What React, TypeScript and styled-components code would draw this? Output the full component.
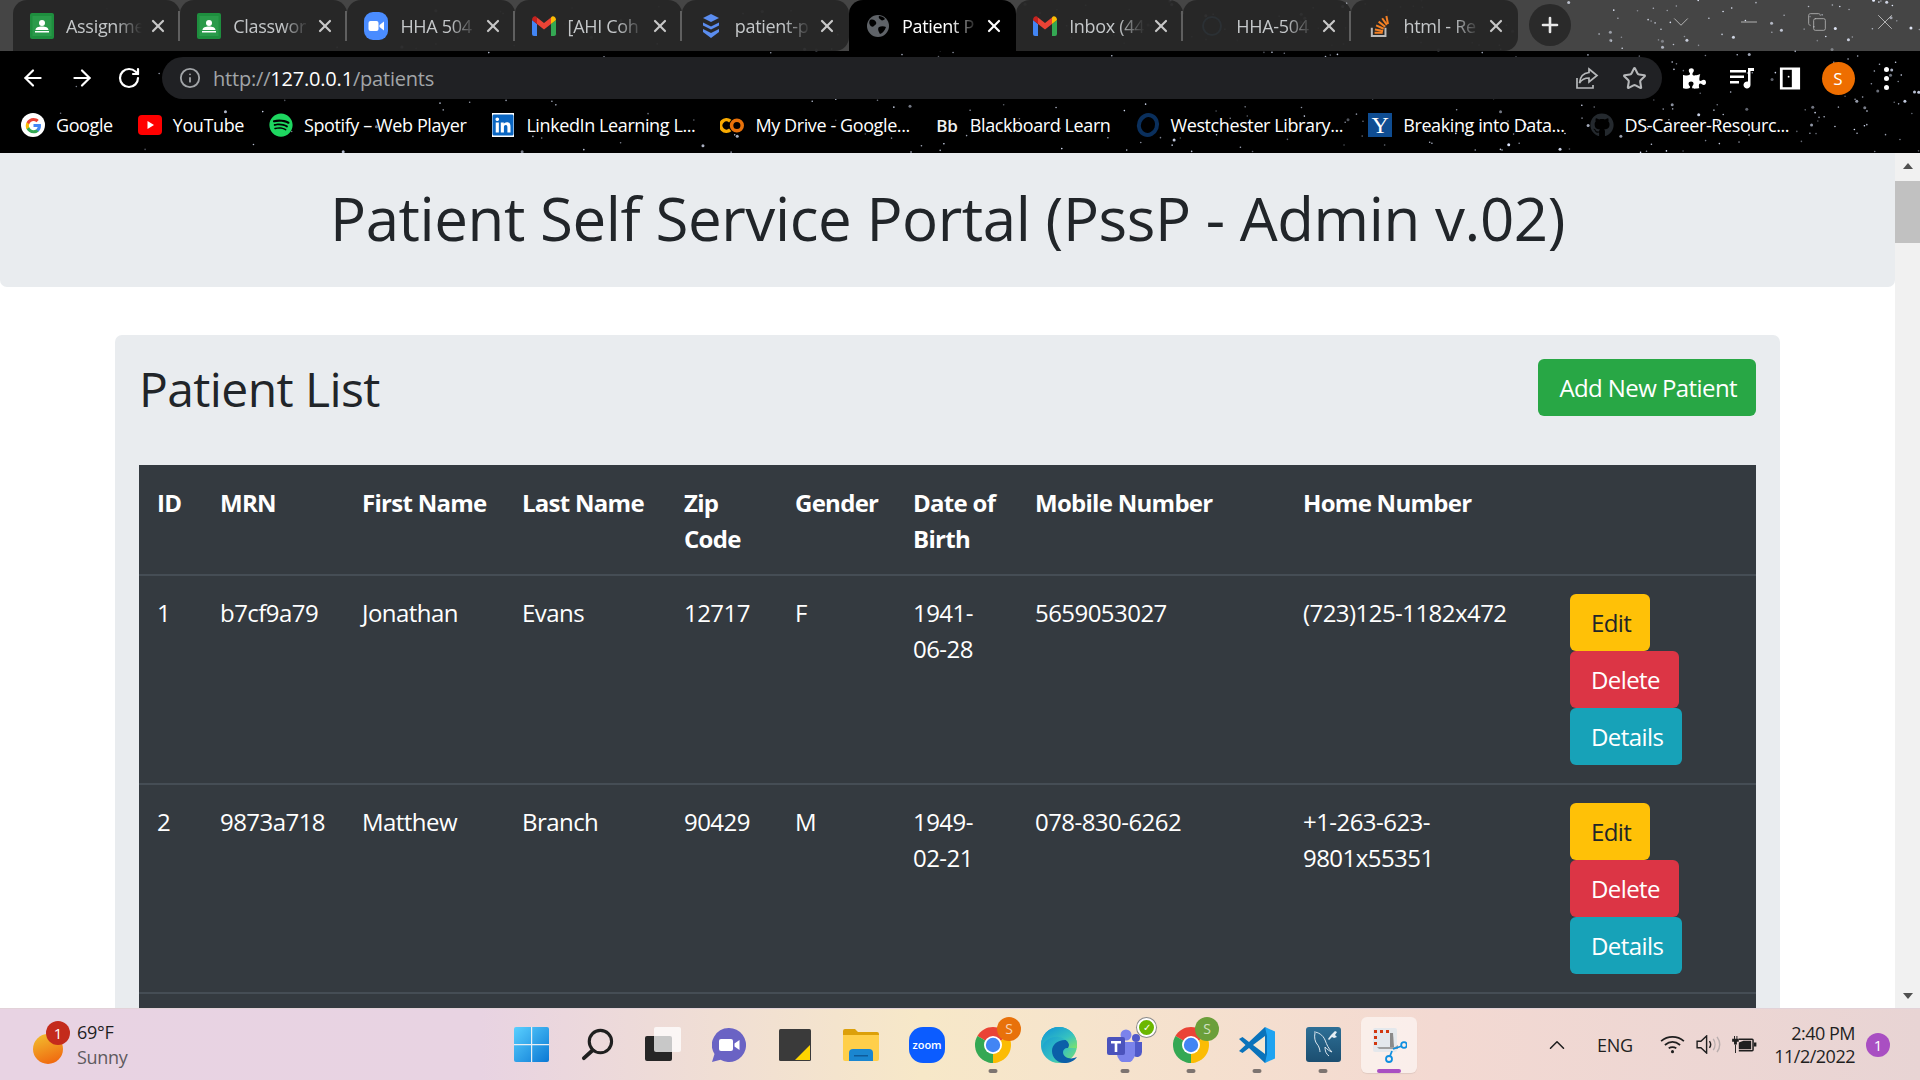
import styled, { createGlobalStyle } from 'styled-components';
import { ReactNode } from 'react';
import { ArrowLeft, ArrowRight, RotateCw, Info, Star, X, Plus, ChevronUp, ChevronDown, Minus, Copy } from 'lucide-react';
import { FaGithub, FaSpotify, FaLinkedin, FaPuzzlePiece } from 'react-icons/fa';

const uiFont = `'Open Sans', 'Noto Sans', 'Liberation Sans', sans-serif`;

const GlobalStyle = createGlobalStyle`
  html, body {
    margin: 0;
    padding: 0;
    width: 1920px;
    height: 1080px;
    overflow: hidden;
    font-family: ${uiFont};
  }
  * { box-sizing: border-box; }
`;

/* ---------- star field behind the browser frame ---------- */
function makeStars() {
  let seed = 77;
  const rnd = () => {
    seed = (seed * 16807) % 2147483647;
    return seed / 2147483647;
  };
  const stars: { x: number; y: number; r: number; o: number }[] = [];
  for (let i = 0; i < 480; i++) {
    // denser towards the right side of the window
    const x = Math.pow(rnd(), 0.5) * 1920;
    const y = rnd() * 153;
    stars.push({ x, y, r: rnd() < 0.18 ? 1.5 : 0.8, o: 0.35 + rnd() * 0.65 });
  }
  return stars;
}
const stars = makeStars();

function StarField() {
  return (
    <StarSvg viewBox="0 0 1920 153" width={1920} height={153}>
      {stars.map((s, i) => (
        <circle key={i} cx={s.x} cy={s.y} r={s.r} fill="#dfe8ff" opacity={s.o} />
      ))}
    </StarSvg>
  );
}

/* ---------- small brand drawings ---------- */
function ClassroomIcon() {
  return (
    <svg viewBox="0 0 24 26" width={24} height={26}>
      <rect width="24" height="26" rx="2" fill="#1e8e3e" />
      <rect x="2.5" y="3" width="19" height="20" fill="#2a9a4a" />
      <circle cx="12" cy="10" r="3" fill="#fff" />
      <path d="M5.5 17c0-2.5 3-3.6 6.5-3.6s6.5 1.1 6.5 3.6zM5 18h14v1.6H5z" fill="#fff" />
    </svg>
  );
}
function ZoomTabIcon() {
  return (
    <svg viewBox="0 0 24 28" width={24} height={28}>
      <rect width="24" height="28" rx="9" fill="#4a8cff" />
      <rect x="4.5" y="9" width="10" height="10" rx="2" fill="#fff" />
      <path d="M15.5 13l4.500-3.500v9l-4.500-3.500z" fill="#fff" />
    </svg>
  );
}
function GmailIcon() {
  return (
    <svg viewBox="0 0 24 20" width={24} height={20}>
      <path d="M0 4v14a2 2 0 0 0 2 2h3V8z" fill="#4285f4" />
      <path d="M24 4v14a2 2 0 0 1-2 2h-3V8z" fill="#34a853" />
      <path d="M19 1.5 12 7 5 1.5V8l7 5.500L19 8z" fill="#ea4335" />
      <path d="M0 4c0-3 3.300-5 5-2.500V8z" fill="#c5221f" />
      <path d="M24 4c0-3-3.300-5-5-2.500V8z" fill="#fbbc04" />
    </svg>
  );
}
function StackedIcon() {
  return (
    <svg viewBox="0 0 20 26" width={20} height={26}>
      <path d="M10 1l8 4-8 4-8-4z" fill="#5b8def" />
      <path d="M2 9.500l8 4 8-4v3l-8 4-8-4z" fill="#5b8def" />
      <path d="M2 16l8 4 8-4v3l-8 6-8-6z" fill="#5b8def" />
    </svg>
  );
}
function GlobeIcon() {
  return (
    <svg viewBox="0 0 24 24" width={24} height={24}>
      <circle cx="12" cy="12" r="11" fill="#5f6368" />
      <path d="M4 6c3-1 5 0 6 2s-1 3-2 4-3 1-4-1-1-3 0-5zM13 13c2-1 5-1 7 0-1 3-3 6-6 7-1-2-3-5-1-7zM13 2c2 0 5 1 6 3-1 1-3 2-4 1s-3-2-2-4z" fill="#000" />
    </svg>
  );
}
function FaintRingIcon() {
  return (
    <svg viewBox="0 0 24 24" width={24} height={24}>
      <circle cx="12" cy="12" r="9" fill="none" stroke="#2b3034" strokeWidth="2" />
    </svg>
  );
}
function StackOverflowIcon() {
  return (
    <svg viewBox="0 0 22 26" width={20} height={26}>
      <path d="M2 15v9h15v-9" fill="none" stroke="#bcbbbb" strokeWidth="2.200" />
      <path d="M5 20.500h9M5.400 16.800l9 1.600M6.700 12.400l8.400 3.600M9.500 8.200l7.200 5.700M13.400 4.500l5.200 7.300M18 2l1.800 8.800" stroke="#f48024" strokeWidth="2.200" fill="none" />
    </svg>
  );
}
function GoogleIcon() {
  return (
    <BookmarkDisc>
      <svg viewBox="0 0 48 48" width={17} height={17}>
        <path fill="#4285f4" d="M45.100 24.500c0-1.600-.1-3.100-.4-4.500H24v8.500h11.800c-.5 2.800-2.100 5.100-4.400 6.600v5.500h7.100c4.200-3.800 6.600-9.500 6.600-16.100z" />
        <path fill="#34a853" d="M24 46c5.900 0 10.900-2 14.500-5.400l-7.100-5.500c-2 1.300-4.500 2.100-7.400 2.100-5.700 0-10.500-3.800-12.200-9H4.500v5.700C8.100 41.100 15.500 46 24 46z" />
        <path fill="#fbbc05" d="M11.800 28.700c-.4-1.300-.7-2.800-.7-4.200s.3-3 .7-4.300v-5.700H4.500C3 17.500 2 20.900 2 24.500s1 7 2.500 10z" />
        <path fill="#ea4335" d="M24 11.300c3.200 0 6.100 1.100 8.400 3.300l6.300-6.300C34.900 4.800 29.900 2.800 24 2.800 15.500 2.800 8.100 7.900 4.500 14.900l7.300 5.700c1.700-5.500 6.500-9.300 12.200-9.300z" />
      </svg>
    </BookmarkDisc>
  );
}
function YouTubeIcon() {
  return (
    <svg viewBox="0 0 24 20" width={24} height={20}>
      <rect width="24" height="20" rx="4" fill="#f00" />
      <path d="M9.500 6l6.500 4-6.500 4z" fill="#fff" />
    </svg>
  );
}
function ColabIcon() {
  return (
    <svg viewBox="0 0 27 18" width={25} height={17}>
      <path d="M11.500 4a6.500 6.500 0 1 0 0 10" fill="none" stroke="#f9ab00" strokeWidth="4" />
      <circle cx="19" cy="9" r="6" fill="none" stroke="#e8710a" strokeWidth="4" />
    </svg>
  );
}
function YaleIcon() {
  return <YaleBox>Y</YaleBox>;
}
function BlackboardIcon() {
  return <BbMark>Bb</BbMark>;
}
function WestchesterIcon() {
  return <WestRing />;
}
function LinkedinIcon() {
  return (
    <LinkedinBox>
      <FaLinkedin size={24} color="#0a66c2" />
    </LinkedinBox>
  );
}
function SpotifyIcon() {
  return <FaSpotify size={24} color="#1ed760" />;
}
function GithubIcon() {
  return <FaGithub size={24} color="#24292e" />;
}
function ShareIcon() {
  return (
    <svg viewBox="0 0 24 24" width={24} height={24} fill="none" stroke="#b6b8ba" strokeWidth="1.700">
      <path d="M2 12v10h16v-3" />
      <path d="M14 3l8 6.500-8 6.500v-4c-4 0-7 1-9.500 5 .5-6 4-10 9.500-10.500z" />
    </svg>
  );
}
function QueueIcon() {
  return (
    <svg viewBox="0 0 26 24" width={26} height={24} fill="#fff">
      <path d="M1 4h16v2.400H1zM1 9.500h14v2.400H1zM1 15h9v2.400H1z" />
      <path d="M19 2h6v3h-3.500v14a3.500 3.500 0 1 1-2.500-3.400z" />
    </svg>
  );
}
function SidePanelIcon() {
  return (
    <svg viewBox="0 0 24 26" width={22} height={25}>
      <rect x="1" y="1" width="22" height="24" fill="#fff" />
      <rect x="4" y="3.500" width="10" height="19" fill="#000" />
      <circle cx="10.500" cy="11" r="1" fill="#fff" />
    </svg>
  );
}

/* ---------- taskbar drawings ---------- */
function WindowsIcon() {
  return (
    <svg viewBox="0 0 35 35" width={35} height={35}>
      <defs>
        <linearGradient id="winA" x1="0" y1="0" x2="1" y2="1">
          <stop offset="0" stopColor="#5ad0ff" />
          <stop offset="1" stopColor="#0a78d4" />
        </linearGradient>
      </defs>
      <rect width="35" height="35" rx="2" fill="url(#winA)" />
      <path d="M17 0h1.200v35H17zM0 17h35v1.200H0z" fill="#e9eef3" />
    </svg>
  );
}
function SearchIcon() {
  return (
    <svg viewBox="0 0 34 34" width={33} height={33} fill="none" stroke="#1f1f1f" strokeWidth="3.200">
      <circle cx="20" cy="14" r="11.500" />
      <path d="M12 23l-9 8" strokeLinecap="round" strokeWidth="4" />
    </svg>
  );
}
function TaskViewIcon() {
  return (
    <svg viewBox="0 0 36 36" width={36} height={36}>
      <rect x="0" y="9" width="27" height="25" rx="2" fill="#262626" />
      <rect x="9" y="0" width="27" height="25" rx="2" fill="#fff" opacity=".75" />
    </svg>
  );
}
function ChatIcon() {
  return (
    <svg viewBox="0 0 34 34" width={34} height={34}>
      <path d="M17 0a17 17 0 1 1-8.500 31.700L0 34l2.500-8A17 17 0 0 1 17 0z" fill="#6a63c4" />
      <rect x="7" y="11" width="14" height="12" rx="2" fill="#fff" />
      <path d="M22.500 15.500l5-3.500v10l-5-3.500z" fill="#fff" />
    </svg>
  );
}
function StickyIcon() {
  return (
    <svg viewBox="0 0 32 32" width={32} height={32}>
      <rect width="32" height="32" rx="1.500" fill="#3a3a3a" />
      <path d="M31 16v15H16z" fill="#ffd500" />
    </svg>
  );
}
function FolderIcon() {
  return (
    <svg viewBox="0 0 36 32" width={36} height={32}>
      <path d="M0 2a2 2 0 0 1 2-2h10l3 3h19a2 2 0 0 1 2 2v5H0z" fill="#dca00a" />
      <path d="M0 6h36v24a2 2 0 0 1-2 2H2a2 2 0 0 1-2-2z" fill="#ffcf4a" />
      <path d="M6 32v-8a4 4 0 0 1 4-4h16a4 4 0 0 1 4 4v8z" fill="#1a86d0" />
      <path d="M11 26h14v1.500H11z" fill="#0e5b9a" />
    </svg>
  );
}
function ZoomAppIcon() {
  return <ZoomTile>zoom</ZoomTile>;
}
function ChromeIcon() {
  return (
    <svg viewBox="4 4 40 40" width={36} height={36}>
      <path d="M24 24L6.680 14A20 20 0 0 1 41.320 14Z" fill="#ea4335" />
      <path d="M24 24L41.320 14A20 20 0 0 1 24 44Z" fill="#fbbc04" />
      <path d="M24 24L24 44A20 20 0 0 1 6.680 14Z" fill="#34a853" />
      <circle cx="24" cy="24" r="10" fill="#fff" />
      <circle cx="24" cy="24" r="8" fill="#4285f4" />
    </svg>
  );
}
function EdgeIcon() {
  return (
    <svg viewBox="0 0 36 36" width={36} height={36}>
      <defs>
        <linearGradient id="edgeA" x1="0" y1="0" x2="1" y2="1">
          <stop offset="0" stopColor="#0c8fd8" />
          <stop offset=".6" stopColor="#35c1c1" />
          <stop offset="1" stopColor="#7fe36a" />
        </linearGradient>
      </defs>
      <circle cx="18" cy="18" r="18" fill="url(#edgeA)" />
      <path d="M36 21c-1-5-6-8-12-8-8 0-13 5-13 11 0 6 5 12 12 12 6 0 10-2 13-6-6 3-14 1-14-5 0-2 2-4 4-4h10z" fill="#0b5fa8" />
      <path d="M18 0C8 0 0 8 0 18c0 1 .3 2 .5 3C3 13 11 9 18 10c7 1 10 6 10 8 0 1-.5 2-1 3h9v-3C36 8 28 0 18 0z" fill="url(#edgeA)" />
    </svg>
  );
}
function TeamsIcon() {
  return (
    <svg viewBox="0 0 36 34" width={36} height={34}>
      <circle cx="19" cy="7" r="5.500" fill="#7b83eb" />
      <circle cx="29" cy="10" r="4" fill="#5059c9" />
      <path d="M25 14h10v10a5 5 0 0 1-8 4z" fill="#5059c9" />
      <path d="M10 14h18v12a9 9 0 0 1-18 0z" fill="#7b83eb" />
      <rect x="0" y="9" width="18" height="18" rx="2" fill="#4b53bc" />
      <path d="M4 13h10v2.400h-3.700V24H7.700v-8.600H4z" fill="#fff" />
    </svg>
  );
}
function VsCodeIcon() {
  return (
    <svg viewBox="0 0 36 36" width={36} height={36}>
      <path d="M26 0l10 4.500v27L26 36z" fill="#1fa3f1" />
      <path d="M26 0L10 15 3.500 10 0 12l6.500 6L0 24l3.500 2L10 21l16 15 2-9V9z" fill="#0a73bb" />
      <path d="M26 9v18L14 18z" fill="#f5e8d2" />
    </svg>
  );
}
function MysqlIcon() {
  return (
    <svg viewBox="0 0 35 35" width={35} height={35}>
      <defs>
        <linearGradient id="sqlA" x1="0" y1="0" x2="0" y2="1">
          <stop offset="0" stopColor="#2d6f96" />
          <stop offset="1" stopColor="#1c4e70" />
        </linearGradient>
      </defs>
      <rect width="35" height="35" rx="3" fill="url(#sqlA)" />
      <path d="M8 5c4 0 9 3 11 8s3 8 7 12c-3-1-5-3-7-5 0 4 1 7 4 9M9 6c-1 4 0 9 2 11s3 6 3 8" fill="none" stroke="#dbe6ee" strokeWidth="1" />
      <path d="M25 8l4-4 2 1-2 3 2 2-3 1-2-1-3 3-1-1z" fill="#e6eef4" />
    </svg>
  );
}
function SnipIcon() {
  return (
    <svg viewBox="0 0 36 36" width={36} height={36}>
      <rect x="2" y="1" width="24" height="24" rx="2" fill="#e4e8ec" />
      <path d="M3 3h3v3H3zM9 3h3v3H9zM15 3h3v3h-3zM3 9h3v3H3zM3 15h3v3H3z" fill="#d2380f" />
      <path d="M19 6l3 0 1 14-4 2z" fill="#8a8a8a" />
      <path d="M6 20h18l3-2v4H8z" fill="#a0a0a0" />
      <circle cx="33" cy="18" r="2.800" fill="none" stroke="#0f8fe0" strokeWidth="1.800" />
      <circle cx="18" cy="32" r="3" fill="none" stroke="#0f8fe0" strokeWidth="1.800" />
      <path d="M22 22l9-3M21 24l-2 5" stroke="#0f8fe0" strokeWidth="1.800" />
    </svg>
  );
}
function WifiIcon() {
  return (
    <svg viewBox="0 0 26 20" width={25} height={19} fill="none" stroke="#1f1f1f" strokeWidth="1.800">
      <path d="M1 6.500c7-6 17-6 24 0M5 10.500c5-4 11-4 16 0M9 14c3-2 5-2 8 0" />
      <circle cx="13" cy="17.500" r="1.600" fill="#1f1f1f" stroke="none" />
    </svg>
  );
}
function VolumeIcon() {
  return (
    <svg viewBox="0 0 26 20" width={25} height={19} fill="none" stroke="#1f1f1f" strokeWidth="1.500">
      <path d="M1 6.500h4L11 1v18l-6-5.500H1z" />
      <path d="M14 6.500c1.500 2 1.500 5 0 7" />
      <path d="M18 4c2.400 3.500 2.400 8.500 0 12M22 2c3.500 5 3.500 11 0 16" stroke="#b9aeae" />
    </svg>
  );
}
function BatteryIcon() {
  return (
    <svg viewBox="0 0 26 20" width={25} height={19} fill="#1f1f1f">
      <path d="M0 4h7v3H5v3H2V7H0zM2 1h1v3H2zM4.500 1h1v3h-1z" />
      <path d="M3 10h1v9H3z" />
      <path fill="none" stroke="#1f1f1f" strokeWidth="1.600" d="M7 4.500h14a1 1 0 0 1 1 1v10a1 1 0 0 1-1 1H7" />
      <path d="M7 8l5-2h8v9H7zM23 8h2.500v4H23z" />
    </svg>
  );
}

/* ---------- data ---------- */
const tabs: { title: string; icon: () => ReactNode; active?: boolean; sep?: boolean; round?: boolean }[] = [
  { title: 'Assignme', icon: ClassroomIcon, sep: true },
  { title: 'Classwor', icon: ClassroomIcon, sep: true },
  { title: 'HHA 504', icon: ZoomTabIcon, sep: true },
  { title: '[AHI Coh', icon: GmailIcon, sep: true },
  { title: 'patient-p', icon: StackedIcon, round: true },
  { title: 'Patient P', icon: GlobeIcon, active: true },
  { title: 'Inbox (44', icon: GmailIcon, sep: true },
  { title: 'HHA-504', icon: FaintRingIcon, sep: true },
  { title: 'html - Re', icon: StackOverflowIcon, round: true },
];

const bookmarks: { label: string; icon: () => ReactNode }[] = [
  { label: 'Google', icon: GoogleIcon },
  { label: 'YouTube', icon: YouTubeIcon },
  { label: 'Spotify – Web Player', icon: SpotifyIcon },
  { label: 'LinkedIn Learning L...', icon: LinkedinIcon },
  { label: 'My Drive - Google...', icon: ColabIcon },
  { label: 'Blackboard Learn', icon: BlackboardIcon },
  { label: 'Westchester Library...', icon: WestchesterIcon },
  { label: 'Breaking into Data...', icon: YaleIcon },
  { label: 'DS-Career-Resourc...', icon: GithubIcon },
];

const patients = [
  { id: 1, mrn: 'b7cf9a79', first: 'Jonathan', last: 'Evans', zip: '12717', gender: 'F', dob: '1941-06-28', mobile: '5659053027', home: '(723)125-1182x472' },
  { id: 2, mrn: '9873a718', first: 'Matthew', last: 'Branch', zip: '90429', gender: 'M', dob: '1949-02-21', mobile: '078-830-6262', home: '+1-263-623-9801x55351' },
];

const columnWidths = [63, 142, 160, 162, 111, 118, 122, 268, 267, 204];

export default function App() {
  return (
    <Screen>
      <GlobalStyle />
      <BrowserFrame>
        <StarField />
        <TabStrip>
          <TabRow>
            {tabs.map((t) => (
              <Tab key={t.title} $active={t.active} $sep={t.sep} $round={t.round}>
                <Favicon>
                  <t.icon />
                </Favicon>
                <TabTitle $active={t.active}>{t.title}</TabTitle>
                <X size={20} strokeWidth={2.6} color={t.active ? '#fff' : '#c8c8c8'} />
              </Tab>
            ))}
            <NewTab>
              <Plus size={24} strokeWidth={2.6} color="#e8e8e8" />
            </NewTab>
          </TabRow>
          <WindowControls>
            <WindowSlot><ChevronDown size={26} strokeWidth={0.9} color="#b5b5b5" /></WindowSlot>
            <WindowSlot><Minus size={26} strokeWidth={0.9} color="#b5b5b5" /></WindowSlot>
            <WindowSlot><Copy size={20} strokeWidth={1} color="#b5b5b5" /></WindowSlot>
            <WindowSlot><X size={26} strokeWidth={0.9} color="#b5b5b5" /></WindowSlot>
          </WindowControls>
        </TabStrip>
        <Toolbar>
          <NavButtons>
            <ArrowLeft size={26} color="#fff" strokeWidth={2} />
            <ArrowRight size={26} color="#fff" strokeWidth={2} />
            <RotateCw size={24} color="#fff" strokeWidth={2.2} />
          </NavButtons>
          <AddressBar>
            <Info size={22} color="#a2a5a8" strokeWidth={2} />
            <UrlText>
              http://<b>127.0.0.1</b>/patients
            </UrlText>
            <AddressActions>
              <ShareIcon />
              <Star size={25} color="#b6b8ba" strokeWidth={2} />
            </AddressActions>
          </AddressBar>
          <ToolbarIcons>
            <ToolSlot><FaPuzzlePiece size={23} color="#fff" /></ToolSlot>
            <ToolSlot><QueueIcon /></ToolSlot>
            <ToolSlot><SidePanelIcon /></ToolSlot>
            <ToolSlot><Avatar>S</Avatar></ToolSlot>
            <ToolSlot>
              <MenuDots>
                <i />
                <i />
                <i />
              </MenuDots>
            </ToolSlot>
          </ToolbarIcons>
        </Toolbar>
        <BookmarksBar>
          {bookmarks.map((b) => (
            <Bookmark key={b.label}>
              <BookmarkIcon>
                <b.icon />
              </BookmarkIcon>
              {b.label}
            </Bookmark>
          ))}
        </BookmarksBar>
      </BrowserFrame>

      <Viewport>
        <Page>
          <Jumbotron>Patient Self Service Portal (PssP - Admin v.02)</Jumbotron>
          <Card>
            <CardHeader>
              <CardTitle>Patient List</CardTitle>
              <Btn $variant="success">Add New Patient</Btn>
            </CardHeader>
            <Table>
              <colgroup>
                {columnWidths.map((w, i) => (
                  <Col key={i} $w={w} />
                ))}
              </colgroup>
              <thead>
                <tr>
                  <Th>ID</Th>
                  <Th>MRN</Th>
                  <Th>First Name</Th>
                  <Th>Last Name</Th>
                  <Th>Zip Code</Th>
                  <Th>Gender</Th>
                  <Th>Date of Birth</Th>
                  <Th>Mobile Number</Th>
                  <Th>Home Number</Th>
                  <Th />
                </tr>
              </thead>
              <tbody>
                {patients.map((p) => (
                  <tr key={p.id}>
                    <Td>{p.id}</Td>
                    <Td>{p.mrn}</Td>
                    <Td>{p.first}</Td>
                    <Td>{p.last}</Td>
                    <Td>{p.zip}</Td>
                    <Td>{p.gender}</Td>
                    <Td>{p.dob}</Td>
                    <Td>{p.mobile}</Td>
                    <Td>{p.home}</Td>
                    <ActionTd>
                      <Actions>
                        <Btn $variant="warning">Edit</Btn>
                        <Btn $variant="danger">Delete</Btn>
                        <Btn $variant="info">Details</Btn>
                      </Actions>
                    </ActionTd>
                  </tr>
                ))}
                <tr>
                  <EmptyCell colSpan={10} />
                </tr>
              </tbody>
            </Table>
          </Card>
        </Page>
        <Scrollbar>
          <ScrollArrow $up />
          <ScrollThumb />
          <ScrollArrow />
        </Scrollbar>
      </Viewport>

      <Taskbar>
        <Weather>
          <WeatherIcon>
            <WeatherBadge>1</WeatherBadge>
          </WeatherIcon>
          <WeatherText>
            <span>69°F</span>
            <WeatherSub>Sunny</WeatherSub>
          </WeatherText>
        </Weather>
        <TaskIcons>
          <TaskButton><WindowsIcon /></TaskButton>
          <TaskButton><SearchIcon /></TaskButton>
          <TaskButton><TaskViewIcon /></TaskButton>
          <TaskButton><ChatIcon /></TaskButton>
          <TaskButton><StickyIcon /></TaskButton>
          <TaskButton><FolderIcon /></TaskButton>
          <TaskButton><ZoomAppIcon /></TaskButton>
          <TaskButton $running>
            <ChromeIcon />
            <ProfileBadge $color="#e8710a">S</ProfileBadge>
          </TaskButton>
          <TaskButton><EdgeIcon /></TaskButton>
          <TaskButton $running>
            <TeamsIcon />
            <StatusBadge>✓</StatusBadge>
          </TaskButton>
          <TaskButton $running>
            <ChromeIcon />
            <ProfileBadge $color="#6b9f3a">S</ProfileBadge>
          </TaskButton>
          <TaskButton $running><VsCodeIcon /></TaskButton>
          <TaskButton $running><MysqlIcon /></TaskButton>
          <TaskButton $active><SnipIcon /></TaskButton>
        </TaskIcons>
        <Tray>
          <ChevronUp size={26} strokeWidth={1.4} color="#1f1f1f" />
          <Lang>ENG</Lang>
          <TrayIcons>
            <WifiIcon />
            <VolumeIcon />
            <BatteryIcon />
          </TrayIcons>
          <Clock>
            <span>2:40 PM</span>
            <span>11/2/2022</span>
          </Clock>
          <NotifyBadge>1</NotifyBadge>
        </Tray>
      </Taskbar>
    </Screen>
  );
}

const Screen = styled.div`
  width: 1920px;
  height: 1080px;
  display: flex;
  flex-direction: column;
  overflow: hidden;
  background: #fff;
`;

/* browser frame */
const BrowserFrame = styled.header`
  height: 153px;
  flex: none;
  position: relative;
  background: #000;
  color: #fff;
`;

const StarSvg = styled.svg`
  position: absolute;
  inset: 0;
`;

const TabStrip = styled.div`
  position: relative;
  height: 51px;
  padding-left: 13px;
  display: flex;
  justify-content: space-between;
  background: rgba(255, 255, 255, 0.27);
`;

const TabRow = styled.div`
  display: flex;
  align-items: stretch;
`;

const Tab = styled.div<{ $active?: boolean; $sep?: boolean; $round?: boolean }>`
  width: 167.2px;
  position: relative;
  display: flex;
  align-items: center;
  gap: 12px;
  padding: 0 12px 0 17px;
  border-radius: ${(p) => (p.$round ? '14px 14px 14px 0' : '14px 14px 0 0')};
  background: ${(p) => (p.$active ? '#000' : 'rgba(38, 38, 38, 0.95)')};

  svg {
    flex: none;
  }

  ${(p) =>
    p.$sep &&
    `&::after {
      content: '';
      position: absolute;
      right: 0;
      top: 11px;
      bottom: 10px;
      width: 2px;
      background: #5f5f5f;
    }`}
`;

const Favicon = styled.span`
  width: 24px;
  height: 28px;
  flex: none;
  display: flex;
  align-items: center;
  justify-content: center;
`;

const TabTitle = styled.span<{ $active?: boolean }>`
  flex: 1;
  min-width: 0;
  margin-right: -6px;
  white-space: nowrap;
  font-size: 18px;
  letter-spacing: -0.3px;
  color: ${(p) => (p.$active ? '#fff' : '#c4c7c9')};
  mask-image: linear-gradient(to right, #000 65%, transparent 100%);
`;

const NewTab = styled.div`
  width: 42px;
  height: 42px;
  margin: 4px 0 0 11px;
  border-radius: 50%;
  background: #2a2a2a;
  display: flex;
  align-items: center;
  justify-content: center;
`;

const WindowControls = styled.div`
  padding: 0 1px 7px 0;
  display: flex;
  align-items: center;
`;

const WindowSlot = styled.span`
  width: 68px;
  display: flex;
  justify-content: center;
`;

const Toolbar = styled.div`
  position: relative;
  height: 48px;
  padding-top: 6px;
  display: flex;
  align-items: stretch;
`;

const NavButtons = styled.div`
  width: 162px;
  padding: 0 21px 0 20px;
  display: flex;
  align-items: center;
  justify-content: space-between;
`;

const AddressBar = styled.div`
  width: 1500px;
  height: 42px;
  padding: 0 15px 0 17px;
  border-radius: 21px;
  background: #202124;
  display: flex;
  align-items: center;
  gap: 12px;
`;

const UrlText = styled.span`
  flex: 1;
  padding-top: 1px;
  font-size: 20px;
  letter-spacing: -0.2px;
  color: #a2a5a8;

  b {
    color: #fff;
    font-weight: 400;
  }
`;

const AddressActions = styled.div`
  display: flex;
  align-items: center;
  gap: 23px;
`;

const ToolbarIcons = styled.div`
  flex: 1;
  padding-left: 8px;
  display: flex;
  align-items: center;
`;

const ToolSlot = styled.span`
  width: 48px;
  display: flex;
  align-items: center;
  justify-content: center;
`;

const Avatar = styled.div`
  width: 33px;
  height: 33px;
  border-radius: 50%;
  background: #ee6e00;
  display: flex;
  align-items: center;
  justify-content: center;
  font-size: 17px;
`;

const MenuDots = styled.div`
  display: flex;
  flex-direction: column;
  gap: 4px;

  i {
    width: 5px;
    height: 5px;
    border-radius: 50%;
    background: #fff;
  }
`;

const BookmarksBar = styled.nav`
  position: relative;
  height: 54px;
  padding: 0 0 2px 21px;
  display: flex;
  align-items: center;
  gap: 25px;
`;

const Bookmark = styled.a`
  display: flex;
  align-items: center;
  gap: 11px;
  font-size: 18px;
  letter-spacing: -0.4px;
  color: #fff;
  white-space: nowrap;
`;

const BookmarkIcon = styled.span`
  width: 24px;
  height: 24px;
  flex: none;
  display: flex;
  align-items: center;
  justify-content: center;
`;

const BookmarkDisc = styled.span`
  width: 24px;
  height: 24px;
  border-radius: 50%;
  background: #fff;
  display: flex;
  align-items: center;
  justify-content: center;
`;

const LinkedinBox = styled.span`
  width: 22px;
  height: 24px;
  background: #fff;
  display: flex;
  align-items: center;
  justify-content: center;
`;

const BbMark = styled.span`
  font-size: 17px;
  font-weight: 600;
  color: #f0f0f0;
`;

const WestRing = styled.span`
  width: 22px;
  height: 24px;
  border-radius: 50%;
  border: 4px solid #0a2f5c;
  transform: rotate(20deg);
`;

const YaleBox = styled.span`
  width: 24px;
  height: 24px;
  background: #0f4d92;
  color: #fff;
  font-family: 'Liberation Serif', serif;
  font-size: 24px;
  line-height: 24px;
  letter-spacing: 0;
  text-align: center;
`;

/* page */
const Viewport = styled.main`
  height: 855px;
  flex: none;
  display: flex;
  overflow: hidden;
`;

const Page = styled.div`
  flex: 1;
  min-width: 0;
  overflow: hidden;
  background: #fff;
`;

const Jumbotron = styled.h1`
  height: 134px;
  margin: 0 0 48px;
  padding-bottom: 4px;
  border-radius: 0 0 7px 7px;
  background: #e9ecef;
  display: flex;
  align-items: center;
  justify-content: center;
  font-size: 60px;
  font-weight: 400;
  letter-spacing: -0.42px;
  color: #212529;
`;

const Card = styled.section`
  margin: 0 115px;
  padding: 24px 24px 0;
  border-radius: 7px;
  background: #e9ecef;
`;

const CardHeader = styled.div`
  height: 106px;
  display: flex;
  align-items: flex-start;
  justify-content: space-between;
`;

const CardTitle = styled.h2`
  margin: 1px 0 0;
  font-size: 48px;
  font-weight: 400;
  line-height: 57px;
  letter-spacing: -0.6px;
  color: #212529;
`;

const Btn = styled.button<{ $variant: 'success' | 'warning' | 'danger' | 'info' }>`
  height: 57px;
  padding: 1.5px 18px 0 20px;
  border: 1px solid transparent;
  border-radius: 6px;
  font-family: inherit;
  font-size: 24px;
  line-height: 36px;
  letter-spacing: -0.58px;
  white-space: nowrap;
  color: ${(p) => (p.$variant === 'warning' ? '#212529' : '#fff')};
  background: ${(p) =>
    ({ success: '#28a745', warning: '#ffc107', danger: '#dc3545', info: '#17a2b8' })[p.$variant]};
`;

const Table = styled.table`
  width: 100%;
  table-layout: fixed;
  border-collapse: collapse;
  background: #343a40;
  color: #fff;
  font-size: 24px;
  line-height: 36px;
  letter-spacing: -0.55px;
`;

const Col = styled.col<{ $w: number }>`
  width: ${(p) => p.$w}px;
`;

const Th = styled.th`
  padding: 20px 8px 17px 18px;
  text-align: left;
  vertical-align: top;
  font-weight: 700;
  letter-spacing: -0.72px;
`;

const Td = styled.td`
  padding: 19px 18px 17px;
  vertical-align: top;
  border-top: 2px solid #454d55;
`;

const ActionTd = styled(Td)`
  padding: 18px;
`;

const EmptyCell = styled.td`
  height: 120px;
  border-top: 2px solid #454d55;
`;

const Actions = styled.div`
  display: flex;
  flex-direction: column;
  align-items: flex-start;
`;

const Scrollbar = styled.aside`
  width: 25px;
  flex: none;
  background: #f1f1f1;
  display: flex;
  flex-direction: column;
  align-items: stretch;
`;

const ScrollArrow = styled.div<{ $up?: boolean }>`
  height: 25px;
  margin-top: ${(p) => (p.$up ? '0' : 'auto')};
  display: flex;
  align-items: center;
  justify-content: center;

  &::before {
    content: '';
    border-left: 5px solid transparent;
    border-right: 5px solid transparent;
    ${(p) => (p.$up ? 'border-bottom: 6px solid #505050;' : 'border-top: 6px solid #505050;')}
  }
`;

const ScrollThumb = styled.div`
  height: 62px;
  margin-top: 3px;
  background: #c1c1c1;
`;

/* taskbar */
const Taskbar = styled.footer`
  height: 72px;
  flex: none;
  display: flex;
  align-items: center;
  border-top: 1px solid #e2d2d8;
  background: linear-gradient(90deg, #e8d3e3 0%, #e8d3e2 25%, #f7e8c8 48%, #f6e4cc 56%, #f3d9d2 75%, #e8d4d4 100%);
  color: #1f1f1f;
`;

const Weather = styled.div`
  width: 498px;
  flex: none;
  padding-left: 33px;
  display: flex;
  align-items: center;
  gap: 14px;
`;

const WeatherIcon = styled.div`
  width: 30px;
  height: 30px;
  margin-top: 8px;
  position: relative;
  border-radius: 50%;
  background: linear-gradient(160deg, #f2c230 0%, #f0680f 90%);
`;

const WeatherBadge = styled.span`
  position: absolute;
  top: -13px;
  right: -7px;
  width: 24px;
  height: 24px;
  border-radius: 50%;
  background: #c42b1c;
  color: #fff;
  font-size: 15px;
  display: flex;
  align-items: center;
  justify-content: center;
`;

const WeatherText = styled.div`
  display: flex;
  flex-direction: column;
  font-size: 18px;
  line-height: 25px;
  letter-spacing: -0.3px;
`;

const WeatherSub = styled.span`
  color: #5e5a5e;
`;

const TaskIcons = styled.div`
  display: flex;
  align-items: center;
`;

const TaskButton = styled.div<{ $running?: boolean; $active?: boolean }>`
  width: 66px;
  height: 56px;
  position: relative;
  border-radius: 6px;
  display: flex;
  align-items: center;
  justify-content: center;

  ${(p) =>
    p.$active &&
    `&::before {
      content: '';
      position: absolute;
      inset: 0 5px;
      border-radius: 6px;
      background: rgba(255, 255, 255, 0.55);
      box-shadow: 0 1px 1px rgba(0, 0, 0, 0.08);
    }
    svg { position: relative; }`}

  ${(p) =>
    (p.$running || p.$active) &&
    `&::after {
      content: '';
      position: absolute;
      left: 50%;
      bottom: 0;
      transform: translateX(-50%);
      width: ${p.$active ? 24 : 9}px;
      height: 4px;
      border-radius: 2px;
      background: ${p.$active ? '#a94fc2' : '#7d7470'};
    }`}
`;

const ZoomTile = styled.div`
  width: 36px;
  height: 36px;
  border-radius: 14px;
  background: #0b5cff;
  color: #fff;
  font-size: 11px;
  font-weight: 600;
  display: flex;
  align-items: center;
  justify-content: center;
`;

const ProfileBadge = styled.span<{ $color: string }>`
  position: absolute;
  top: 0;
  right: 5px;
  width: 24px;
  height: 24px;
  border-radius: 50%;
  background: ${(p) => p.$color};
  color: rgba(255, 255, 255, 0.7);
  font-size: 14px;
  display: flex;
  align-items: center;
  justify-content: center;
`;

const StatusBadge = styled.span`
  position: absolute;
  top: 1px;
  right: 2px;
  width: 19px;
  height: 19px;
  border-radius: 50%;
  background: #6bb700;
  border: 2px solid #fff;
  box-shadow: 0 0 0 1px #8a8a8a;
  color: #fff;
  font-size: 10px;
  display: flex;
  align-items: center;
  justify-content: center;
`;

const Tray = styled.div`
  flex: 1;
  min-width: 0;
  height: 100%;
  padding: 0 30px 0 122px;
  display: flex;
  align-items: center;
`;

const Lang = styled.span`
  margin-left: 27px;
  font-size: 18px;
  letter-spacing: -0.3px;
`;

const TrayIcons = styled.div`
  margin-left: 27px;
  display: flex;
  align-items: center;
  gap: 11px;
`;

const Clock = styled.div`
  margin-left: auto;
  display: flex;
  flex-direction: column;
  align-items: flex-end;
  font-size: 18px;
  line-height: 23px;
  letter-spacing: -0.5px;
`;

const NotifyBadge = styled.span`
  margin-left: 11px;
  width: 24px;
  height: 24px;
  border-radius: 50%;
  background: #a94fc2;
  color: #fff;
  font-size: 15px;
  display: flex;
  align-items: center;
  justify-content: center;
`;
